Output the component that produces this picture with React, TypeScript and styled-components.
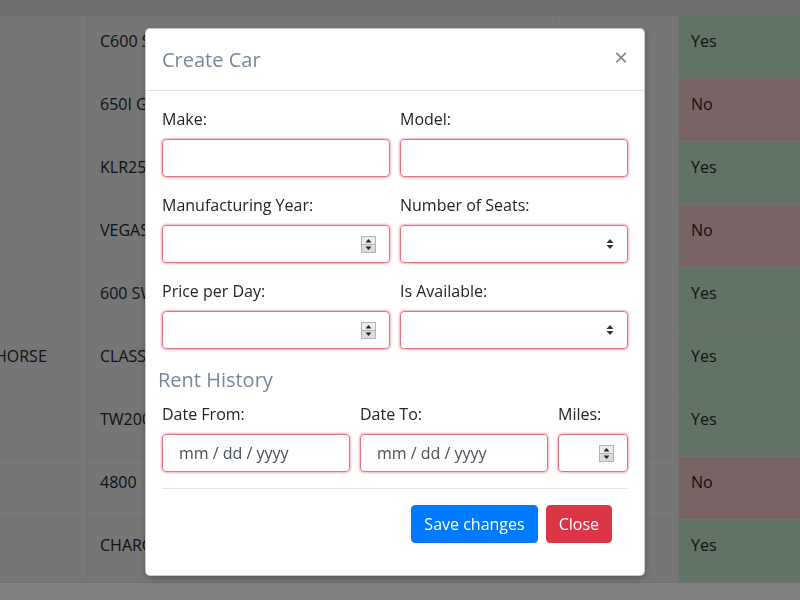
import styled, { createGlobalStyle } from "styled-components";

const GlobalStyle = createGlobalStyle`
    body {
        margin: 0;
        background: #fff;
        color: #212529;
        font-family: "Open Sans", "Noto Sans", sans-serif;
        font-size: 16px;
        line-height: 1.5;
        overflow: hidden;
    }
    * {
        box-sizing: border-box;
    }
`;

const COLUMNS = "148px 291px 75px 102px 123px 1fr";

const Table = styled.div`
    margin-left: -61px;
    width: 861px;
`;

const Row = styled.div<{ $head?: boolean }>`
    display: grid;
    grid-template-columns: ${COLUMNS};
    height: ${({ $head }) => ($head ? "16px" : "63px")};
    border-bottom: 1px solid #dee2e6;
    background: ${({ $head }) => ($head ? "#dcdcdc" : "#ececec")};
`;

const Cell = styled.div<{ $state?: "yes" | "no" }>`
    padding: 13px 12px 12px;
    border-left: 1px solid #dee2e6;
    white-space: nowrap;
    overflow: hidden;
    background: ${({ $state }) =>
        $state === "yes" ? "#c3e6cb" : $state === "no" ? "#f5c6cb" : "transparent"};
`;

const Backdrop = styled.div`
    position: fixed;
    inset: 0;
    background: rgba(0, 0, 0, 0.5);
`;

const Modal = styled.div`
    position: fixed;
    top: 28px;
    left: 145px;
    width: 500px;
    background: #fff;
    border: 1px solid rgba(0, 0, 0, 0.2);
    border-radius: 5px;
    box-shadow: 0 2px 6px rgba(0, 0, 0, 0.25);
`;

const Header = styled.div`
    display: flex;
    align-items: flex-start;
    padding: 16px 16px 15px;
    border-bottom: 1px solid #dee2e6;
`;

const Title = styled.h5`
    margin: 0;
    font-size: 20px;
    font-weight: 400;
    line-height: 30px;
    color: #778899;
`;

const CloseX = styled.button`
    margin: -16px -16px -16px auto;
    padding: 16px;
    background: none;
    border: 0;
    font-family: "Open Sans", sans-serif;
    font-size: 24px;
    line-height: 1;
    color: #000;
    opacity: 0.5;
`;

const Body = styled.div`
    padding: 16px;
`;

const FormRow = styled.div<{ $cols: string }>`
    display: grid;
    grid-template-columns: ${({ $cols }) => $cols};
    column-gap: 10px;
`;

const Group = styled.div`
    margin-bottom: 16px;
`;

const Label = styled.label`
    display: block;
    margin-bottom: 8px;
    line-height: 24px;
`;

const Field = styled.div<{ $date?: boolean }>`
    display: flex;
    align-items: center;
    justify-content: ${({ $date }) => ($date ? "flex-start" : "flex-end")};
    height: 38px;
    padding: ${({ $date }) => ($date ? "6px 12px 6px 16px" : "6px 13px 6px 12px")};
    border: 1px solid #e2737c;
    border-radius: 4px;
    box-shadow: 0 0 2px 1px rgba(220, 53, 69, 0.35);
    color: #495057;
`;

const Section = styled.h5`
    margin: 3px 0 10px -4px;
    font-size: 20px;
    font-weight: 400;
    line-height: 24px;
    color: #778899;
`;

const Divider = styled.hr`
    margin: 0;
    border: 0;
    border-top: 1px solid rgba(0, 0, 0, 0.1);
`;

const Footer = styled.div`
    display: flex;
    justify-content: flex-end;
    gap: 8px;
    padding: 16px;
`;

const Button = styled.button<{ $variant: "primary" | "danger" }>`
    padding: 6px 12px;
    font-family: "Open Sans", sans-serif;
    font-size: 16px;
    line-height: 24px;
    color: #fff;
    border-radius: 4px;
    border: 1px solid ${({ $variant }) => ($variant === "primary" ? "#007bff" : "#dc3545")};
    background: ${({ $variant }) => ($variant === "primary" ? "#007bff" : "#dc3545")};
`;

function Spinner() {
    return (
        <svg width="15" height="17" viewBox="0 0 15 17">
            <rect x="0.5" y="0.5" width="14" height="16" fill="#ececec" stroke="#b4b4b4" />
            <rect x="1" y="9" width="13" height="7" fill="#dcdcdc" />
            <line x1="1" y1="8.5" x2="14" y2="8.5" stroke="#b4b4b4" />
            <polygon points="4.5,6.5 10.5,6.5 7.5,3" fill="#222" />
            <polygon points="4.5,10.5 10.5,10.5 7.5,14" fill="#222" />
        </svg>
    );
}

function SelectArrow() {
    return (
        <svg width="8" height="12" viewBox="0 0 8 12">
            <polygon points="0.5,5 7.5,5 4,1" fill="#333" />
            <polygon points="0.5,7 7.5,7 4,11" fill="#333" />
        </svg>
    );
}

const cars = [
    { make: "", model: "C600 SPORT", available: true },
    { make: "", model: "650I GS", available: false },
    { make: "", model: "KLR250", available: true },
    { make: "", model: "VEGAS", available: false },
    { make: "", model: "600 SWAT", available: true },
    { make: "IRON HORSE", model: "CLASSIC", available: true },
    { make: "", model: "TW200", available: true },
    { make: "", model: "4800", available: false },
    { make: "", model: "CHARGER", available: true },
];

export default function App() {
    return (
        <>
            <GlobalStyle />
            <Table>
                <Row $head>
                    <Cell />
                    <Cell />
                    <Cell />
                    <Cell />
                    <Cell />
                    <Cell />
                </Row>
                {cars.map((car) => (
                    <Row key={car.model}>
                        <Cell>{car.make}</Cell>
                        <Cell>{car.model}</Cell>
                        <Cell />
                        <Cell />
                        <Cell />
                        <Cell $state={car.available ? "yes" : "no"}>
                            {car.available ? "Yes" : "No"}
                        </Cell>
                    </Row>
                ))}
            </Table>
            <Backdrop />
            <Modal>
                <Header>
                    <Title>Create Car</Title>
                    <CloseX>×</CloseX>
                </Header>
                <Body>
                    <FormRow $cols="1fr 1fr">
                        <Group>
                            <Label>Make:</Label>
                            <Field />
                        </Group>
                        <Group>
                            <Label>Model:</Label>
                            <Field />
                        </Group>
                        <Group>
                            <Label>Manufacturing Year:</Label>
                            <Field>
                                <Spinner />
                            </Field>
                        </Group>
                        <Group>
                            <Label>Number of Seats:</Label>
                            <Field>
                                <SelectArrow />
                            </Field>
                        </Group>
                        <Group>
                            <Label>Price per Day:</Label>
                            <Field>
                                <Spinner />
                            </Field>
                        </Group>
                        <Group>
                            <Label>Is Available:</Label>
                            <Field>
                                <SelectArrow />
                            </Field>
                        </Group>
                    </FormRow>
                    <Section>Rent History</Section>
                    <FormRow $cols="1fr 1fr 70px">
                        <Group>
                            <Label>Date From:</Label>
                            <Field $date>mm / dd / yyyy</Field>
                        </Group>
                        <Group>
                            <Label>Date To:</Label>
                            <Field $date>mm / dd / yyyy</Field>
                        </Group>
                        <Group>
                            <Label>Miles:</Label>
                            <Field>
                                <Spinner />
                            </Field>
                        </Group>
                    </FormRow>
                    <Divider />
                    <Footer>
                        <Button $variant="primary">Save changes</Button>
                        <Button $variant="danger">Close</Button>
                    </Footer>
                </Body>
            </Modal>
        </>
    );
}
